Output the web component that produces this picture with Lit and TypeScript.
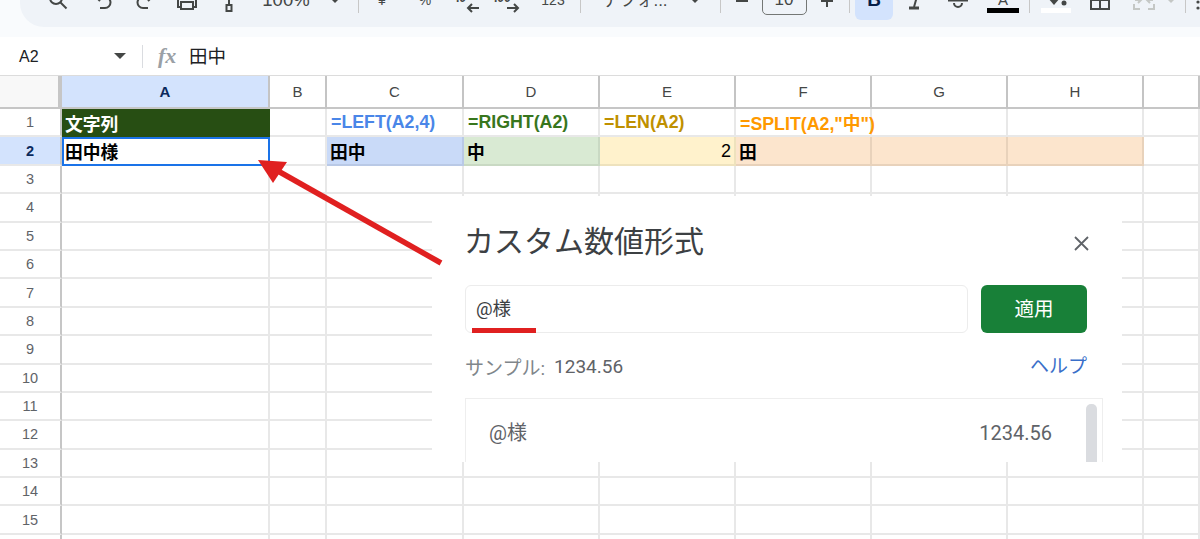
import { LitElement, html, css, svg } from 'lit';
import { customElement } from 'lit/decorators.js';

const COLS = ['A', 'B', 'C', 'D', 'E', 'F', 'G', 'H', ''];
const ROWS = Array.from({ length: 16 }, (_, i) => i + 1);

type Cell = { text?: string; cls: string };
const CELLS: Record<string, Cell> = {
  A1: { text: '文字列', cls: 'title' },
  C1: { text: '=LEFT(A2,4)', cls: 'f c-blue' },
  D1: { text: '=RIGHT(A2)', cls: 'f c-green' },
  E1: { text: '=LEN(A2)', cls: 'f c-gold' },
  F1: { text: '=SPLIT(A2,"中")', cls: 'f c-orange' },
  A2: { text: '田中様', cls: 'b selected' },
  C2: { text: '田中', cls: 'b bg-blue' },
  D2: { text: '中', cls: 'b bg-green' },
  E2: { text: '2', cls: 'num bg-yellow' },
  F2: { text: '田', cls: 'b bg-orange' },
  G2: { cls: 'bg-orange' },
  H2: { cls: 'bg-orange' },
};

const icon = (w: number, h: number, body: unknown) =>
  html`<svg width=${w} height=${h} viewBox="0 0 ${w} ${h}">${body}</svg>`;

// c = centre x on the page, w = slot width
const TOOLS: Array<{ c: number; w: number; t: unknown }> = [
  { c: 58, w: 20, t: icon(20, 20, svg`<g class="ln"><circle cx="8" cy="8" r="6"/><path d="M12.5 12.5 18.5 18.5"/></g>`) },
  { c: 103, w: 20, t: icon(20, 20, svg`<g class="ln"><path d="M3 7H12a5.5 5.5 0 0 1 0 11H7"/><path d="M7 3 3 7 7 11"/></g>`) },
  { c: 145, w: 20, t: icon(20, 20, svg`<g class="ln"><path d="M17 7H8a5.5 5.5 0 0 0 0 11H13"/><path d="M13 3 17 7 13 11"/></g>`) },
  { c: 187, w: 22, t: icon(22, 20, svg`<g class="ln"><path d="M5 17H2V6H20V17H17"/><rect x="5" y="12" width="12" height="7"/></g>`) },
  { c: 227, w: 16, t: icon(16, 24, svg`<g class="ln"><path d="M1 11H10V17"/><rect x="7.5" y="17" width="5" height="6"/></g>`) },
  { c: 286, w: 50, t: html`<span class="t zoom">100%</span>` },
  { c: 335, w: 10, t: html`<span class="caret"></span>` },
  { c: 358, w: 1, t: html`<span class="sep"></span>` },
  { c: 382, w: 12, t: html`<span class="t sm">¥</span>` },
  { c: 425, w: 16, t: html`<span class="t sm">%</span>` },
  { c: 467, w: 26, t: icon(26, 24, svg`<text class="st" x="2" y="14">.0</text><g class="ln"><path d="M25 20H14"/><path d="M18 16 14 20 18 24"/></g>`) },
  { c: 507, w: 26, t: icon(26, 24, svg`<text class="st" x="0" y="14">.00</text><g class="ln"><path d="M13 20H24"/><path d="M20 16 24 20 20 24"/></g>`) },
  { c: 553, w: 26, t: html`<span class="t sm">123</span>` },
  { c: 580, w: 1, t: html`<span class="sep"></span>` },
  { c: 635, w: 72, t: html`<span class="t font">デフォ...</span>` },
  { c: 695, w: 10, t: html`<span class="caret"></span>` },
  { c: 720, w: 1, t: html`<span class="sep"></span>` },
  { c: 742, w: 14, t: icon(14, 4, svg`<path class="ln" d="M1 3H13"/>`) },
  { c: 784, w: 45, t: html`<span class="size">10</span>` },
  { c: 827, w: 14, t: icon(14, 16, svg`<path class="ln" d="M1 9H13M7 2V15"/>`) },
  { c: 849, w: 1, t: html`<span class="sep"></span>` },
  { c: 874, w: 38, t: html`<span class="bold-btn">B</span>` },
  { c: 915, w: 20, t: icon(20, 20, svg`<path class="ln thick" d="M4 18H14"/><path class="ln" d="M13 3 9 17"/>`) },
  { c: 958, w: 20, t: icon(20, 20, svg`<g class="ln"><path d="M0 10.5H20"/><path d="M6 13a4 4 0 0 0 8 0"/></g>`) },
  { c: 1003, w: 32, t: icon(32, 28, svg`<text class="st a" x="16" y="19" text-anchor="middle">A</text><rect x="0" y="22" width="32" height="5" fill="#000"/>`) },
  { c: 1029, w: 1, t: html`<span class="sep"></span>` },
  { c: 1056, w: 30, t: icon(30, 28, svg`<path d="M7 12H19L13 19Z" fill="#444746"/><circle cx="23" cy="17" r="2.5" fill="#444746"/><rect x="0" y="22" width="30" height="5" fill="#fff"/>`) },
  { c: 1100, w: 20, t: icon(20, 20, svg`<g class="ln"><rect x="1" y="0" width="18" height="19"/><path d="M1 10H19M10 0V19"/></g>`) },
  { c: 1144, w: 22, t: icon(22, 20, svg`<g class="ln off"><path d="M1 14V19H7M15 19H21V14"/><path d="M2 10H8M5 7 8 10 5 13M20 10H14M17 7 14 10 17 13"/></g>`) },
  { c: 1171, w: 10, t: html`<span class="caret off"></span>` },
  { c: 1185, w: 1, t: html`<span class="sep"></span>` },
  { c: 1198, w: 4, t: icon(4, 20, svg`<g fill="#444746"><circle cx="2" cy="12" r="1.6"/><circle cx="2" cy="18" r="1.6"/></g>`) },
];

@customElement('app-root')
export class AppRoot extends LitElement {
  static styles = css`
    :host {
      display: block;
      position: relative;
      width: 1200px;
      height: 539px;
      overflow: hidden;
      background: #fff;
      font-family: 'Liberation Sans', 'Noto Sans CJK JP', sans-serif;
      color: #000;
    }
    .top { height: 37px; background: #f9fbfd; padding-left: 20px; }
    .pill {
      height: 27px;
      background: #eff3f8;
      border-bottom-left-radius: 24px;
      overflow: hidden;
    }
    .tools {
      display: flex;
      align-items: center;
      height: 40px;
      margin-top: -20px;
    }
    .tools > div { flex: none; display: flex; justify-content: center; align-items: center; }
    .tools svg { display: block; overflow: visible; }
    .ln { fill: none; stroke: #444746; stroke-width: 2; }
    .thick { stroke-width: 3; }
    .ln.off { stroke: #c4c7c5; }
    .st { font-size: 12px; font-weight: 700; fill: #444746; }
    .st.a { font-size: 15px; font-weight: 400; }
    .t { color: #444746; white-space: nowrap; line-height: 1; }
    .zoom { font-size: 18.5px; }
    .sm { font-size: 14px; }
    .font { font-size: 17px; }
    .caret {
      width: 0;
      height: 0;
      border: 5px solid transparent;
      border-top-color: #444746;
      border-bottom-width: 0;
    }
    .caret.off { border-top-color: #c4c7c5; }
    .sep { width: 1px; height: 26px; background: #c7c7c7; }
    .size {
      box-sizing: border-box;
      width: 45px;
      height: 30px;
      border: 1px solid #747775;
      border-radius: 5px;
      text-align: center;
      line-height: 28px;
      font-size: 17px;
      color: #444746;
    }
    .bold-btn {
      width: 38px;
      height: 40px;
      background: #d3e3fd;
      border-radius: 6px;
      text-align: center;
      line-height: 40px;
      font-weight: 700;
      font-size: 19px;
      color: #041e49;
    }

    .fbar {
      height: 38px;
      display: flex;
      align-items: center;
      border-bottom: 1px solid #dcdcdc;
    }
    .name { width: 95px; padding-left: 19px; font-size: 16px; color: #202124; padding-top: 1px; }
    .name-caret {
      width: 0;
      height: 0;
      border: 6px solid transparent;
      border-top: 6px solid #444746;
      border-bottom-width: 0;
    }
    .fsep { width: 1px; height: 23px; background: #dadce0; margin: 0 15px 0 16px; }
    .fx {
      font-family: 'Liberation Serif', serif;
      font-style: italic;
      font-size: 22px;
      color: #9aa0a6;
      width: 31px;
      font-weight: 700;
    }
    .fval { font-size: 18.5px; color: #202124; padding-bottom: 3px; }

    .grid {
      display: grid;
      grid-template-columns: 62px 208px 57px 137px 136px 136px 136px 136px 136px 56px;
      grid-template-rows: 33px repeat(16, 28.4px);
    }
    .grid > div {
      box-sizing: border-box;
      border-right: 2px solid #e8e8e8;
      border-bottom: 2px solid #e8e8e8;
      display: flex;
      align-items: center;
      white-space: nowrap;
      min-width: 0;
      position: relative;
    }
    .grid > .corner { background: #f8f8f8; border-right: 4px solid #c6c6c6; border-bottom: 2px solid #c6c6c6; }
    .grid > .ch {
      justify-content: center;
      font-size: 15px;
      color: #444746;
      border-right-color: #c4c4c4;
      border-bottom: 2px solid #c6c6c6;
    }
    .grid > .ch.on { background: #d3e3fd; color: #0b2a5c; font-weight: 700; }
    .grid > .rh {
      justify-content: center;
      font-size: 14.5px;
      color: #5f6368;
      border-right-color: #c6c6c6;
    }
    .grid > .rh.on { background: #d3e3fd; color: #0b2a5c; font-weight: 700; }
    .grid > .cell { padding: 0 3px 0 4px; font-size: 17.8px; }
    .grid > .title { background: #274e13; color: #fff; font-weight: 700; border-color: #274e13; padding-left: 3px; padding-top: 1px; }
    .f { font-weight: 700; padding-top: 2px; }
    .grid > .b { font-weight: 700; color: #000; padding-left: 3px; padding-top: 1px; }
    .c-blue { color: #4a86e8; }
    .c-green { color: #38761d; }
    .c-gold { color: #bf9000; }
    .c-orange { color: #ff9900; }
    .grid > .bg-blue { background: #c9daf8; border-color: #b9c9e6; }
    .grid > .bg-green { background: #d9ead3; border-color: #c9d9c3; }
    .grid > .bg-yellow { background: #fff2cc; border-color: #eee2bd; }
    .grid > .bg-orange { background: #fce5cd; border-color: #e8d2bb; }
    .grid > .num { justify-content: flex-end; font-size: 18px; padding-top: 1px; }
    .grid > .selected { outline: 2px solid #1a73e8; outline-offset: -2px; border-color: transparent; }
    .handle {
      position: absolute;
      right: -3px;
      bottom: -3px;
      width: 6px;
      height: 6px;
      border-radius: 50%;
      background: #1a73e8;
    }

    .dialog {
      position: absolute;
      left: 432px;
      top: 196px;
      width: 690px;
      height: 266px;
      box-sizing: border-box;
      background: #fff;
      padding: 21px 35px 0 33px;
      display: flex;
      flex-direction: column;
      font-family: Roboto, 'Noto Sans CJK JP', sans-serif;
      overflow: hidden;
    }
    .head { display: flex; align-items: center; justify-content: space-between; height: 48px; flex: none; margin-bottom: 20px; }
    .head h2 { margin: 2px 0 0 -1px; font-size: 30px; font-weight: 400; color: #3c4043; line-height: 1; }
    .close { display: block; margin-right: -2px; margin-top: 4px; }
    .entry { display: flex; gap: 13px; height: 48px; flex: none; margin-bottom: 17px; }
    .input {
      flex: 1;
      box-sizing: border-box;
      border: 1px solid #ececec;
      border-radius: 6px;
      display: flex;
      align-items: center;
      padding: 0 10px 5px;
      font-size: 18.5px;
      color: #3c4043;
    }
    .apply {
      width: 106px;
      border-radius: 6px;
      background: #188038;
      color: #fff;
      font-size: 19.5px;
      display: flex;
      align-items: center;
      justify-content: center;
      padding-bottom: 3px;
      box-sizing: border-box;
    }
    .sample { display: flex; align-items: center; height: 32px; flex: none; margin-bottom: 16px; font-size: 19px; }
    .sample .lbl { color: #80868b; margin-right: 9px; }
    .sample .val { color: #5f6368; }
    .sample .help { margin-left: auto; color: #3a6fc9; font-size: 19px; padding-bottom: 3px; }
    .list {
      position: relative;
      flex: 1;
      margin-right: -16px;
      border: 1px solid #eeeeee;
      border-bottom: 0;
      padding: 19px 50px 0 23px;
      display: flex;
      justify-content: space-between;
      font-size: 20px;
      color: #5f6368;
      line-height: 30px;
    }
    .thumb {
      position: absolute;
      right: 5px;
      top: 5px;
      bottom: 0;
      width: 11px;
      background: #dadce0;
      border-radius: 5px 5px 0 0;
    }
    .marks { position: absolute; left: 0; top: 0; pointer-events: none; }
  `;

  private _cell(col: string, row: number) {
    const c = CELLS[`${col}${row}`];
    if (!c) return html`<div class="cell"></div>`;
    return html`<div class="cell ${c.cls}">${c.text ?? ''}${c.cls.includes('selected')
      ? html`<span class="handle"></span>`
      : ''}</div>`;
  }

  private _toolbar() {
    let x = 20;
    return TOOLS.map(tool => {
      const left = tool.c - tool.w / 2;
      const gap = left - x;
      x = left + tool.w;
      return html`<div style="width:${tool.w}px;margin-left:${gap}px">${tool.t}</div>`;
    });
  }

  render() {
    return html`
      <div class="top">
        <div class="pill"><div class="tools">${this._toolbar()}</div></div>
      </div>
      <div class="fbar">
        <span class="name">A2</span>
        <span class="name-caret"></span>
        <span class="fsep"></span>
        <span class="fx">fx</span>
        <span class="fval">田中</span>
      </div>
      <div class="grid">
        <div class="corner"></div>
        ${COLS.map(c => html`<div class="ch ${c === 'A' ? 'on' : ''}">${c}</div>`)}
        ${ROWS.map(r => html`
          <div class="rh ${r === 2 ? 'on' : ''}">${r === 16 ? '' : r}</div>
          ${COLS.map(c => this._cell(c, r))}
        `)}
      </div>
      <div class="dialog">
        <div class="head">
          <h2>カスタム数値形式</h2>
          <svg class="close" width="15" height="15" viewBox="0 0 15 15">
            <path d="M1 1 14 14M14 1 1 14" fill="none" stroke="#5f6368" stroke-width="1.8"/>
          </svg>
        </div>
        <div class="entry">
          <div class="input">@様</div>
          <div class="apply">適用</div>
        </div>
        <div class="sample">
          <span class="lbl">サンプル:</span>
          <span class="val">1234.56</span>
          <span class="help">ヘルプ</span>
        </div>
        <div class="list">
          <span>@様</span>
          <span>1234.56</span>
          <span class="thumb"></span>
        </div>
      </div>
      <svg class="marks" width="1200" height="539" viewBox="0 0 1200 539">
        <path d="M278 171 441 263" stroke="#e02020" stroke-width="5.5" fill="none"/>
        <path d="M258 160 287 162 273 183Z" fill="#e02020"/>
        <rect x="472" y="328" width="64" height="5" fill="#e02020"/>
      </svg>
    `;
  }
}
